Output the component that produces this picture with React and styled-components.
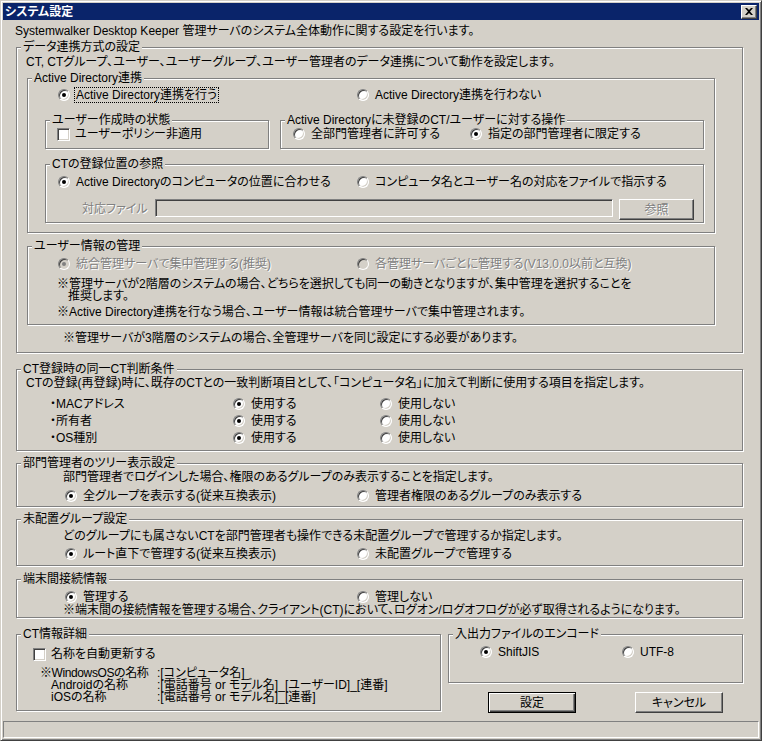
import React from 'react';
import styled, { createGlobalStyle } from 'styled-components';

const FACE = '#d4d0c8';

const GlobalStyle = createGlobalStyle`
  html, body { margin: 0; padding: 0; background: ${FACE}; }
  body {
    font-family: "Liberation Sans", "Noto Sans CJK JP", sans-serif;
    font-size: 12px;
    line-height: 12px;
    color: #000;
  }
  * { box-sizing: border-box; }
`;

const Window = styled.div`
  width: 762px;
  height: 741px;
  background: ${FACE};
  border: 1px solid;
  border-color: ${FACE} #404040 #404040 ${FACE};
  box-shadow: inset 1px 1px 0 #fff, inset -1px -1px 0 #808080;
  padding: 2px;
  display: flex;
  flex-direction: column;
  font-feature-settings: "palt";
`;

const TitleBar = styled.div`
  height: 17px;
  flex: none;
  background: #0a246a;
  color: #fff;
  font-weight: bold;
  display: flex;
  align-items: center;
  justify-content: space-between;
  padding: 0 2px;
`;

const CloseButton = styled.div`
  width: 16px;
  height: 14px;
  background: ${FACE};
  border: 1px solid;
  border-color: #fff #404040 #404040 #fff;
  box-shadow: inset -1px -1px 0 #808080;
  display: flex;
  align-items: center;
  justify-content: center;
`;

const Body = styled.div`
  flex: 1;
  padding: 5px 16px 0 13px;
  display: flex;
  flex-direction: column;
`;

const Text = styled.div`
  height: 12px;
  white-space: nowrap;
  margin-top: ${p => p.$mt || 0}px;
  margin-left: ${p => p.$ml || 0}px;
  padding-left: ${p => p.$pl || 0}px;
  color: ${p => (p.$disabled ? '#808080' : '#000')};
  text-shadow: ${p => (p.$disabled ? '1px 1px 0 #fff' : 'none')};
`;

const Group = styled.fieldset`
  margin: ${p => p.$mt || 0}px 0 0 ${p => p.$ml || 0}px;
  padding: 0 0 ${p => p.$pb || 0}px 0;
  min-width: 0;
  width: ${p => (p.$w ? `${p.$w}px` : 'auto')};
  flex: none;
  border: 1px solid #808080;
  box-shadow: inset 1px 1px 0 #fff, 1px 1px 0 #fff;
`;

const Legend = styled.legend`
  margin-left: 4px;
  padding: 0 2px;
  height: 12px;
  line-height: 12px;
  background: ${FACE};
  white-space: nowrap;
`;

const Row = styled.div`
  display: flex;
  align-items: ${p => p.$align || 'center'};
  height: ${p => p.$h || 16}px;
  margin-top: ${p => p.$mt || 0}px;
  padding-left: ${p => p.$pl || 0}px;
  white-space: nowrap;
`;

const Cell = styled.div`
  width: ${p => p.$w}px;
  flex: none;
`;

const Option = styled.label`
  display: flex;
  align-items: center;
  gap: 5px;
  flex: none;
  width: ${p => (p.$w ? `${p.$w}px` : 'auto')};
  white-space: nowrap;
  color: ${p => (p.$disabled ? '#808080' : '#000')};
  text-shadow: ${p => (p.$disabled ? '1px 1px 0 #fff' : 'none')};
`;

const RadioCircle = styled.span`
  width: 12px;
  height: 12px;
  flex: none;
  border-radius: 50%;
  position: relative;
  background: ${p => (p.$disabled ? FACE : '#fff')};
  border: 1px solid;
  border-color: #808080 #fff #fff #808080;
  box-shadow: inset 1px 1px 0 #404040, inset -1px -1px 0 ${FACE};
  &::after {
    content: '';
    display: ${p => (p.$checked ? 'block' : 'none')};
    position: absolute;
    left: 3px;
    top: 3px;
    width: 4px;
    height: 4px;
    border-radius: 50%;
    background: ${p => (p.$disabled ? '#808080' : '#000')};
  }
`;

const CheckBox = styled.span`
  width: 13px;
  height: 13px;
  flex: none;
  background: #fff;
  border: 1px solid;
  border-color: #808080 #fff #fff #808080;
  box-shadow: inset 1px 1px 0 #404040, inset -1px -1px 0 ${FACE};
`;

const Caption = styled.span`
  padding: 1px 1px;
  outline: ${p => (p.$focus ? '1px dotted #000' : 'none')};
  outline-offset: 0;
`;

const TextBox = styled.div`
  width: ${p => p.$w}px;
  height: 18px;
  flex: none;
  background: ${FACE};
  border: 1px solid;
  border-color: #808080 #fff #fff #808080;
  box-shadow: inset 1px 1px 0 #404040, inset -1px -1px 0 ${FACE};
`;

const Button = styled.button`
  width: ${p => p.$w || 88}px;
  height: ${p => p.$h || 21}px;
  margin-left: ${p => p.$ml || 0}px;
  flex: none;
  padding: 0;
  font: inherit;
  line-height: 12px;
  background: ${FACE};
  color: ${p => (p.disabled ? '#808080' : '#000')};
  text-shadow: ${p => (p.disabled ? '1px 1px 0 #fff' : 'none')};
  border: 1px solid;
  border-color: ${p => (p.$default ? '#000' : '#fff #404040 #404040 #fff')};
  box-shadow: ${p =>
    p.$default
      ? 'inset 1px 1px 0 #fff, inset -1px -1px 0 #404040, inset -2px -2px 0 #808080'
      : 'inset -1px -1px 0 #808080'};
`;

const BottomRow = styled.div`
  display: flex;
  align-items: flex-start;
  margin-top: 10px;
`;

const RightColumn = styled.div`
  width: 295px;
  margin-left: 7px;
  display: flex;
  flex-direction: column;
`;

const ButtonRow = styled.div`
  display: flex;
  margin-top: 9px;
`;

const NameGrid = styled.div`
  display: grid;
  grid-template-columns: 117px auto;
  grid-auto-rows: 12px;
  margin-top: 5px;
  padding-left: 23px;
  white-space: nowrap;
`;

const NameLabel = styled.div`
  padding-left: ${p => p.$indent || 0}px;
  letter-spacing: ${p => (p.$tight ? '-0.4px' : 'normal')};
`;

const StatusBar = styled.div`
  height: 17px;
  flex: none;
  border: 1px solid;
  border-color: #808080 #fff #fff #808080;
`;

function Radio({ checked, disabled, focus, w, children }) {
  return (
    <Option $w={w} $disabled={disabled}>
      <RadioCircle $checked={checked} $disabled={disabled} />
      <Caption $focus={focus}>{children}</Caption>
    </Option>
  );
}

function Check({ children }) {
  return (
    <Option>
      <CheckBox />
      <span>{children}</span>
    </Option>
  );
}

const matchItems = ['・MACアドレス', '・所有者', '・OS種別'];

export default function App() {
  return (
    <>
      <GlobalStyle />
      <Window>
        <TitleBar>
          <span>システム設定</span>
          <CloseButton>
            <svg width="8" height="7" viewBox="0 0 8 7">
              <path d="M0 0h2l2 2 2-2h2L5 3.5 8 7H6L4 5 2 7H0l3-3.5z" fill="#000" />
            </svg>
          </CloseButton>
        </TitleBar>
        <Body>
          <Text $ml={-1}>
            Systemwalker Desktop Keeper 管理サーバのシステム全体動作に関する設定を行います。
          </Text>

          <Group $mt={4} $pb={8}>
            <Legend>データ連携方式の設定</Legend>
            <Text $mt={3} $pl={9}>
              CT, CTグループ、ユーザー、ユーザーグループ、ユーザー管理者のデータ連携について動作を設定します。
            </Text>

            <Group $mt={4} $ml={10} $w={688} $pb={9}>
              <Legend>Active Directory連携</Legend>
              <Row $mt={3} $pl={30}>
                <Radio w={299} checked focus>Active Directory連携を行う</Radio>
                <Radio>Active Directory連携を行わない</Radio>
              </Row>
              <Row $h={35} $mt={11} $pl={17} $align="flex-start">
                <Group $w={224} $pb={6}>
                  <Legend>ユーザー作成時の状態</Legend>
                  <Row $pl={11}>
                    <Check>ユーザーポリシー非適用</Check>
                  </Row>
                </Group>
                <Group $w={424} $ml={11} $pb={6}>
                  <Legend>Active Directoryに未登録のCT/ユーザーに対する操作</Legend>
                  <Row $pl={12}>
                    <Radio w={177}>全部門管理者に許可する</Radio>
                    <Radio checked>指定の部門管理者に限定する</Radio>
                  </Row>
                </Group>
              </Row>
              <Group $mt={9} $ml={17} $w={659} $pb={2}>
                <Legend>CTの登録位置の参照</Legend>
                <Row $mt={4} $pl={12}>
                  <Radio w={299} checked>Active Directoryのコンピュータの位置に合わせる</Radio>
                  <Radio>コンピュータ名とユーザー名の対応をファイルで指示する</Radio>
                </Row>
                <Row $h={21} $mt={9} $pl={36} $align="flex-start">
                  <Cell $w={73}>
                    <Text $mt={4} $disabled>対応ファイル</Text>
                  </Cell>
                  <TextBox $w={458} />
                  <Button disabled $w={75} $ml={6}>参照</Button>
                </Row>
              </Group>
            </Group>

            <Group $mt={7} $ml={10} $w={688} $pb={6}>
              <Legend>ユーザー情報の管理</Legend>
              <Row $mt={4} $pl={30}>
                <Radio w={299} checked disabled>統合管理サーバで集中管理する(推奨)</Radio>
                <Radio disabled>各管理サーバごとに管理する(V13.0.0以前と互換)</Radio>
              </Row>
              <Text $mt={6} $pl={29}>
                ※管理サーバが2階層のシステムの場合、どちらを選択しても同一の動きとなりますが、集中管理を選択することを
              </Text>
              <Text $pl={40}>推奨します。</Text>
              <Text $mt={4} $pl={29}>
                ※Active Directory連携を行なう場合、ユーザー情報は統合管理サーバで集中管理されます。
              </Text>
            </Group>

            <Text $mt={7} $pl={46}>
              ※管理サーバが3階層のシステムの場合、全管理サーバを同じ設定にする必要があります。
            </Text>
          </Group>

          <Group $mt={10} $pb={4}>
            <Legend>CT登録時の同一CT判断条件</Legend>
            <Text $mt={2} $pl={9}>
              CTの登録(再登録)時に、既存のCTとの一致判断項目として、「コンピュータ名」に加えて判断に使用する項目を指定します。
            </Text>
            {matchItems.map((item, i) => (
              <Row key={item} $h={17} $mt={i === 0 ? 6 : 0} $pl={33}>
                <Cell $w={183}>{item}</Cell>
                <Radio w={147} checked>使用する</Radio>
                <Radio>使用しない</Radio>
              </Row>
            ))}
          </Group>

          <Group $mt={6} $pb={2}>
            <Legend>部門管理者のツリー表示設定</Legend>
            <Text $mt={2} $pl={46}>
              部門管理者でログインした場合、権限のあるグループのみ表示することを指定します。
            </Text>
            <Row $mt={5} $pl={48}>
              <Radio w={292} checked>全グループを表示する(従来互換表示)</Radio>
              <Radio>管理者権限のあるグループのみ表示する</Radio>
            </Row>
          </Group>

          <Group $mt={6} $pb={3}>
            <Legend>未配置グループ設定</Legend>
            <Text $mt={5} $pl={46}>
              どのグループにも属さないCTを部門管理者も操作できる未配置グループで管理するか指定します。
            </Text>
            <Row $mt={4} $pl={48}>
              <Radio w={292} checked>ルート直下で管理する(従来互換表示)</Radio>
              <Radio>未配置グループで管理する</Radio>
            </Row>
          </Group>

          <Group $mt={7} $pb={1}>
            <Legend>端末間接続情報</Legend>
            <Row $h={15} $mt={4} $pl={48}>
              <Radio w={292} checked>管理する</Radio>
              <Radio>管理しない</Radio>
            </Row>
            <Text $pl={46}>
              ※端末間の接続情報を管理する場合、クライアント(CT)において、ログオン/ログオフログが必ず取得されるようになります。
            </Text>
          </Group>

          <BottomRow>
            <Group $w={425} $pb={7}>
              <Legend>CT情報詳細</Legend>
              <Row $mt={6} $pl={16}>
                <Check>名称を自動更新する</Check>
              </Row>
              <NameGrid>
                <NameLabel $tight>※WindowsOSの名称</NameLabel>
                <div>:[コンピュータ名]</div>
                <NameLabel $indent={11}>Androidの名称</NameLabel>
                <div>:[電話番号 or モデル名]_[ユーザーID]_[連番]</div>
                <NameLabel $indent={11}>iOSの名称</NameLabel>
                <div>:[電話番号 or モデル名]_[連番]</div>
              </NameGrid>
            </Group>
            <RightColumn>
              <Group $pb={22}>
                <Legend>入出力ファイルのエンコード</Legend>
                <Row $mt={4} $pl={31}>
                  <Radio w={142} checked>ShiftJIS</Radio>
                  <Radio>UTF-8</Radio>
                </Row>
              </Group>
              <ButtonRow>
                <Button $default $ml={40}>設定</Button>
                <Button $ml={59}>キャンセル</Button>
              </ButtonRow>
            </RightColumn>
          </BottomRow>
        </Body>
        <StatusBar />
      </Window>
    </>
  );
}
